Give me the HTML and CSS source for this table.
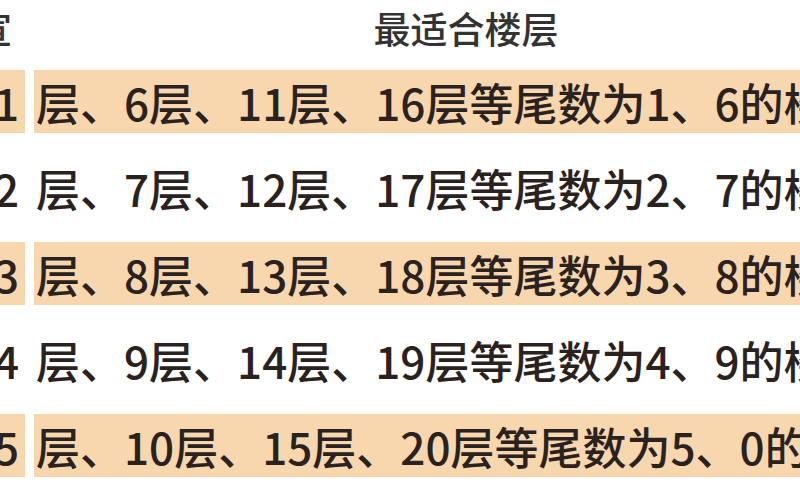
FILE: index.html
```html
<!DOCTYPE html>
<html lang="zh">
<head>
<meta charset="utf-8">
<link rel="stylesheet" href="styles.css">
</head>
<body>
<div class="table">
  <div class="cell head left"><span class="clip">宣</span></div>
  <div class="cell head right">最适合楼层</div>

  <div class="cell left alt">1</div>
  <div class="cell right alt">层、6层、11层、16层等尾数为1、6的楼层</div>

  <div class="cell left">2</div>
  <div class="cell right">层、7层、12层、17层等尾数为2、7的楼层</div>

  <div class="cell left alt">3</div>
  <div class="cell right alt">层、8层、13层、18层等尾数为3、8的楼层</div>

  <div class="cell left">4</div>
  <div class="cell right">层、9层、14层、19层等尾数为4、9的楼层</div>

  <div class="cell left alt">5</div>
  <div class="cell right alt">层、10层、15层、20层等尾数为5、0的楼层</div>
</div>
</body>
</html>
```

FILE: styles.css
```css
html, body {
  margin: 0;
  padding: 0;
  background: #ffffff;
  overflow: hidden;
  width: 800px;
  height: 500px;
}

.table {
  display: grid;
  grid-template-columns: 60px 864px;
  grid-template-rows: 47px repeat(5, 63px);
  column-gap: 9px;
  row-gap: 23px;
  margin-left: -35px;
  font-family: "Noto Sans CJK SC", "Noto Sans", sans-serif;
  color: #2a221f;
}

.cell {
  display: flex;
  align-items: center;
  white-space: nowrap;
  overflow: hidden;
  font-size: 44px;
  font-weight: 500;
}

.left {
  justify-content: flex-end;
  padding-right: 6px;
}

.right {
  padding-left: 2px;
}

.head {
  font-size: 37px;
  line-height: 1;
  color: #333333;
  align-items: flex-end;
}

.head.left {
  padding-right: 0;
}

.clip {
  margin-right: 13px;
}

.head.right {
  justify-content: center;
  padding-left: 0;
}

.alt {
  background: #f8d6ae;
}
```
